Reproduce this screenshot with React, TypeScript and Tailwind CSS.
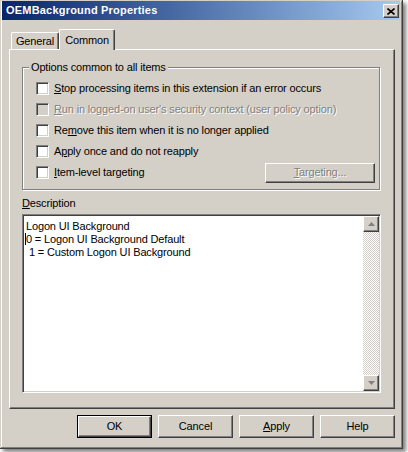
import React from 'react';

const raised =
  'border border-t-white border-l-white border-b-[#404040] border-r-[#404040] shadow-[inset_-1px_-1px_0_#808080]';
const sunken =
  'border border-t-[#808080] border-l-[#808080] border-b-white border-r-white shadow-[inset_1px_1px_0_#404040,inset_-1px_-1px_0_#d4d0c8]';

function Checkbox({ disabled }: { disabled?: boolean }) {
  return <div className={`w-[13px] h-[13px] shrink-0 ${sunken} ${disabled ? 'bg-[#d4d0c8]' : 'bg-white'}`} />;
}

function Option({ label, disabled }: { label: React.ReactNode; disabled?: boolean }) {
  return (
    <div className="flex items-center h-[21px]">
      <Checkbox disabled={disabled} />
      <span
        className={`ml-[5px] ${disabled ? 'text-[#808080] [text-shadow:1px_1px_0_#fff]' : ''}`}
      >
        {label}
      </span>
    </div>
  );
}

function Arrow({ up }: { up?: boolean }) {
  return (
    <svg width="7" height="4" viewBox="0 0 7 4">
      <path d={up ? 'M3.5 0L7 4H0z' : 'M0 0h7L3.5 4z'} fill="#808080" />
    </svg>
  );
}

export default function App() {
  return (
    <div className="min-h-screen bg-white font-['Liberation_Sans',Arial,sans-serif] text-[11px] tracking-[-0.15px] text-black leading-[13px]">
      <div className="flex flex-col w-[403px] h-[449px] bg-[#d4d0c8] shadow-[inset_-1px_-1px_0_#404040,inset_1px_1px_0_#d4d0c8,inset_-2px_-2px_0_#808080,inset_2px_2px_0_#fff,3px_3px_4px_rgba(0,0,0,0.5)]">
        {/* Title bar */}
        <div className="mt-[1px] ml-[2px] w-[398px] h-[19px] flex items-center justify-between pl-[4px] pr-[1px] bg-linear-to-r from-[#0a246a] to-[#a6caf0]">
          <span className="text-white font-bold tracking-[0.2px]">OEMBackground Properties</span>
          <div className={`w-[16px] h-[14px] mt-[1px] flex items-center justify-center bg-[#d4d0c8] ${raised}`}>
            <svg width="8" height="7" viewBox="0 0 8 7">
              <path d="M0.5 0.5L7.5 6.5M7.5 0.5L0.5 6.5" stroke="#000" strokeWidth="1.6" />
            </svg>
          </div>
        </div>

        {/* Tabs */}
        <div className="flex items-end ml-[9px] mt-[9px] h-[20px]">
          <div className="ml-[2px] w-[48px] h-[17px] flex items-center justify-center border-t border-l border-white border-r border-r-[#404040] rounded-t-[2px] shadow-[inset_-1px_0_0_#808080]">
            General
          </div>
          <div className="relative z-10 -mb-[1px] w-[56px] h-[21px] flex items-start justify-center pt-[4px] bg-[#d4d0c8] border-t border-l border-white border-r border-r-[#404040] rounded-t-[2px] shadow-[inset_-1px_0_0_#808080]">
            Common
          </div>
        </div>

        {/* Panel */}
        <div className="ml-[9px] w-[386px] h-[360px] flex flex-col pl-[12px] border border-t-white border-l-white border-b-[#404040] border-r-[#404040] shadow-[inset_-1px_-1px_0_#808080]">
          <div className="relative mt-[17px] w-[358px] h-[123px] border border-[#808080] shadow-[1px_1px_0_#fff,inset_1px_1px_0_#fff] pl-[13px] pt-[10px]">
            <span className="absolute -top-[7px] left-[6px] px-[2px] bg-[#d4d0c8]">Options common to all items</span>
            <Option label={<><u>S</u>top processing items in this extension if an error occurs</>} />
            <Option disabled label={<><u>R</u>un in logged-on user's security context (user policy option)</>} />
            <Option label={<>Re<u>m</u>ove this item when it is no longer applied</>} />
            <Option label={<>A<u>p</u>ply once and do not reapply</>} />
            <div className="flex items-center justify-between h-[21px]">
              <div className="flex items-center">
                <Checkbox />
                <span className="ml-[5px]"><u>I</u>tem-level targeting</span>
              </div>
              <div className={`mr-[4px] w-[110px] h-[20px] flex items-center justify-center ${raised}`}>
                <span className="text-[#808080] [text-shadow:1px_1px_0_#fff]"><u>T</u>argeting...</span>
              </div>
            </div>
          </div>

          <div className="mt-[7px] h-[13px]"><u>D</u>escription</div>

          <div className={`mt-[4px] w-[359px] h-[179px] flex bg-white ${sunken}`}>
            <div className="flex-1 pl-[3px] pt-[5px] whitespace-pre">
              <div>Logon UI Background</div>
              <div><span className="border-l border-black -ml-[1px]">0</span> = Logon UI Background Default</div>
              <div> 1 = Custom Logon UI Background</div>
            </div>
            <div className="w-[16px] mt-[1px] mb-[1px] mr-[1px] flex flex-col">
              <div className={`h-[16px] flex items-center justify-center bg-[#d4d0c8] ${raised}`}>
                <Arrow up />
              </div>
              <div className="flex-1 bg-[repeating-conic-gradient(#d4d0c8_0%_25%,#ffffff_0%_50%)] bg-size-[2px_2px]" />
              <div className={`h-[16px] flex items-center justify-center bg-[#d4d0c8] ${raised}`}>
                <Arrow />
              </div>
            </div>
          </div>
        </div>

        {/* Buttons */}
        <div className="mt-[6px] flex justify-end gap-[6px] pr-[8px]">
          <div className="w-[75px] h-[23px] border border-black">
            <div className={`w-full h-full flex items-center justify-center ${raised}`}>OK</div>
          </div>
          <div className={`w-[75px] h-[23px] flex items-center justify-center ${raised}`}>Cancel</div>
          <div className={`w-[75px] h-[23px] flex items-center justify-center ${raised}`}><span><u>A</u>pply</span></div>
          <div className={`w-[75px] h-[23px] flex items-center justify-center ${raised}`}>Help</div>
        </div>
      </div>
    </div>
  );
}
